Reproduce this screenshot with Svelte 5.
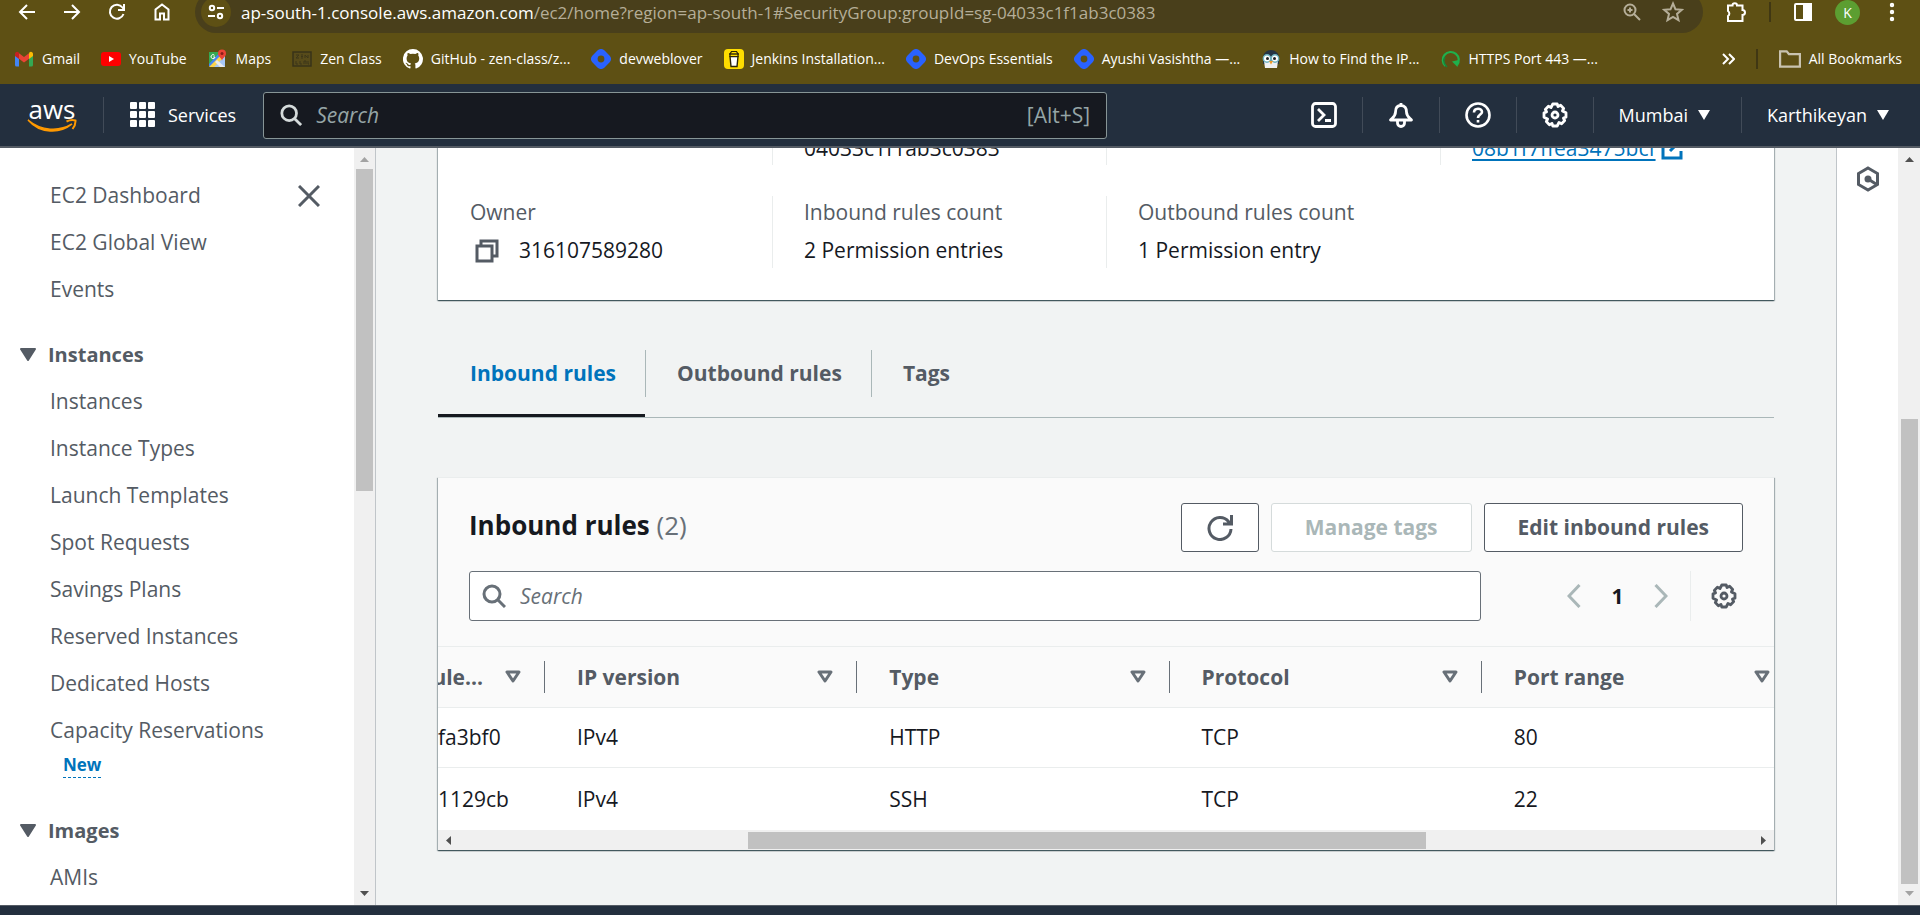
<script>
  const bookmarks = [
    { icon: 'gmail', label: 'Gmail' },
    { icon: 'youtube', label: 'YouTube' },
    { icon: 'maps', label: 'Maps' },
    { icon: 'zen', label: 'Zen Class' },
    { icon: 'github', label: 'GitHub - zen-class/z...' },
    { icon: 'hashnode', label: 'devweblover' },
    { icon: 'coffee', label: 'Jenkins Installation...' },
    { icon: 'hashnode', label: 'DevOps Essentials' },
    { icon: 'hashnode', label: 'Ayushi Vasishtha —...' },
    { icon: 'penguin', label: 'How to Find the IP...' },
    { icon: 'ring', label: 'HTTPS Port 443 —...' }
  ];

  const topLinks = ['EC2 Global View', 'Events'];
  const instanceLinks = [
    'Instances',
    'Instance Types',
    'Launch Templates',
    'Spot Requests',
    'Savings Plans',
    'Reserved Instances',
    'Dedicated Hosts'
  ];

  const columns = ['IP version', 'Type', 'Protocol', 'Port range'];
  const rules = [
    { id: 'fa3bf0', cells: ['IPv4', 'HTTP', 'TCP', '80'] },
    { id: '1129cb', cells: ['IPv4', 'SSH', 'TCP', '22'] }
  ];

  let navSearch = $state('');
  let ruleSearch = $state('');
</script>

{#snippet favicon(name)}
  <svg class="fav" viewBox="0 0 20 20" aria-hidden="true">
    {#if name === 'gmail'}
      <path d="M1 5v11a1.500 1.500 0 0 0 1.500 1.500H5V9z" fill="#4285f4" />
      <path d="M19 5v11a1.500 1.500 0 0 1-1.500 1.500H15V9z" fill="#34a853" />
      <path d="M15 4.500V10l4-3V5c0-2-2-3-3.500-1.800z" fill="#fbbc04" />
      <path d="M1 5v2l4 3V4L4.500 3.200C3 2 1 3 1 5z" fill="#c5221f" />
      <path d="M5 4.200v5.600l5 3.800 5-3.800V4.200L10 8z" fill="#ea4335" />
    {:else if name === 'youtube'}
      <rect x="0" y="3" width="20" height="14" rx="3" fill="#f00" />
      <path d="M8 7v6l5-3z" fill="#fff" />
    {:else if name === 'maps'}
      <path d="M1 3h16v14.500H1z" fill="#4285f4" />
      <path d="M1 3h11L1 15z" fill="#34a853" />
      <path d="M4 18 17 6v12z" fill="#a7c8f5" />
      <path d="M1 18 14 5l2.500 2.500L6 18z" fill="#fbd44b" />
      <path d="m9 11 8 7h-5l-5-5z" fill="#e8eaed" />
      <path d="M14 12c0-3-4-4-4-7.500a4 4 0 0 1 8 0C18 8 14 9 14 12z" fill="#ea4335" />
      <circle cx="14" cy="4.500" r="1.500" fill="#8c1d18" />
      <path d="M6.500 6.300A2 2 0 1 0 7 8H5.200" fill="none" stroke="#fff" />
    {:else if name === 'zen'}
      <rect x="1" y="3" width="18" height="14" fill="#574b1a" stroke="#393319" stroke-width="1.500" />
      <path d="M4 6h3L4 9h3M9 6h2M9 7.500h2M9 9h2M13 9V6l3 3V6M4 12v3h2M8 12v3h2M12 15v-3h2v3M16 12v3h1" stroke="#3d3618" fill="none" />
    {:else if name === 'github'}
      <path fill="#fff" d="M10 0a10 10 0 0 0-3.200 19.500c.5.100.7-.2.700-.5v-1.800c-2.800.6-3.400-1.300-3.400-1.300-.4-1.200-1.100-1.500-1.100-1.500-.9-.6.100-.6.100-.6 1 .1 1.500 1 1.500 1 .9 1.600 2.400 1.100 2.900.9.100-.7.400-1.100.6-1.400-2.200-.2-4.500-1.100-4.500-5 0-1.100.4-2 1-2.700-.1-.2-.4-1.300.1-2.600 0 0 .8-.3 2.700 1a9.600 9.600 0 0 1 5 0c1.900-1.300 2.700-1 2.700-1 .5 1.300.2 2.400.1 2.600.6.700 1 1.600 1 2.700 0 3.900-2.300 4.800-4.500 5 .4.300.7 1 .7 1.900V19c0 .3.200.6.700.5A10 10 0 0 0 10 0z" />
    {:else if name === 'hashnode'}
      <path fill="#2962ff" d="M1.300 6.700 6.700 1.300a4.700 4.700 0 0 1 6.600 0l5.400 5.400a4.700 4.700 0 0 1 0 6.600l-5.400 5.400a4.700 4.700 0 0 1-6.600 0l-5.400-5.400a4.700 4.700 0 0 1 0-6.600z" />
      <circle cx="10" cy="10" r="3.400" fill="#5e5014" />
    {:else if name === 'coffee'}
      <rect width="20" height="20" rx="4" fill="#fd0" />
      <path d="M6 7.500h8l-1 10H7z" fill="#fff" stroke="#2b2508" stroke-width="1.400" />
      <path d="M7.500 2.500h5L14 5v2.500H6V5z" fill="#fd0" stroke="#2b2508" stroke-width="1.200" />
      <path d="M5 5h10" stroke="#2b2508" stroke-width="1.400" />
    {:else if name === 'penguin'}
      <path d="M2 9c0-5 4-8 8-8s8 3 8 8v6H2z" fill="#263544" />
      <path d="M3 12h14l-1 7H4z" fill="#f0f0f0" />
      <circle cx="6" cy="9.500" r="3.700" fill="#fff" stroke="#6db1bd" stroke-width="1.400" />
      <circle cx="14" cy="9.500" r="3.700" fill="#fff" stroke="#6db1bd" stroke-width="1.400" />
      <circle cx="6.500" cy="9.500" r="1.500" fill="#222" />
      <circle cx="13.500" cy="9.500" r="1.500" fill="#222" />
      <path d="M8 12h4l-2 3.500z" fill="#f29b2c" />
    {:else}
      <path d="M4.500 17A8 8 0 1 1 16 16" fill="none" stroke="#1fb04c" stroke-width="2.200" />
      <path d="M6 18C3 15 2 11 4 8" fill="none" stroke="#17843a" stroke-width="1.500" />
      <path d="M11 12.500 17.500 11l-1 7z" fill="#1fb04c" />
    {/if}
  </svg>
{/snippet}

{#snippet magnifier()}
  <svg class="i24" viewBox="0 0 24 24" fill="none" stroke="currentColor" stroke-width="3" aria-hidden="true">
    <circle cx="10" cy="10" r="8" /><path d="m16 16 7 7" />
  </svg>
{/snippet}

{#snippet gear()}
  <svg class="i26" viewBox="0 0 26 26" fill="none" stroke="currentColor" stroke-width="2.800" stroke-linejoin="round" aria-hidden="true">
    <path d="M10.800 2h4.400l.8 2.600 2.600-1.300 3.100 3.100L20.400 9l3.600 1.800v4.400L21.400 16l1.300 2.600-3.100 3.100-2.600-1.300-1.800 3.600h-4.400L10 21.400l-2.600 1.300-3.100-3.100L5.600 17 2 15.200v-4.400L4.600 10 3.300 7.400l3.100-3.100L9 5.600z" />
    <circle cx="13" cy="13" r="3" />
  </svg>
{/snippet}

{#snippet caret()}
  <svg class="caret" viewBox="0 0 12 12" fill="currentColor" aria-hidden="true"><path d="M0 1h12L6 11z" /></svg>
{/snippet}

{#snippet sectionCaret()}
  <svg class="section-caret" viewBox="0 0 16 14" fill="#545b64" stroke="#545b64" stroke-width="2" stroke-linejoin="round" aria-hidden="true"><path d="M1 1h14L8 12z" /></svg>
{/snippet}

{#snippet sort()}
  <svg class="sort" viewBox="0 0 16 14" fill="none" stroke="#687078" stroke-width="3" stroke-linejoin="round" aria-hidden="true"><path d="M2 2h12L8 11z" /></svg>
{/snippet}

<div class="page">
  <div class="browser">
    <div class="toolbar">
      <div class="nav-buttons">
        <button aria-label="Back"><svg class="i18" viewBox="0 0 18 18"><path d="M17 9H2M9 2 2 9l7 7" /></svg></button>
        <button aria-label="Forward"><svg class="i18" viewBox="0 0 18 18"><path d="M1 9h15M9 2l7 7-7 7" /></svg></button>
        <button aria-label="Reload"><svg class="i18" viewBox="0 0 18 18"><path d="M15.500 11A7 7 0 1 1 14.500 4.500L16 6.500M16 1v6h-6" /></svg></button>
        <button aria-label="Home"><svg class="i18" viewBox="0 0 18 18"><path d="M2.500 16.500V6.500L9 1.500l6.500 5v10H11v-6H7v6z" /></svg></button>
      </div>
      <div class="address">
        <button class="site-info" aria-label="Site information">
          <svg class="i18" viewBox="0 0 18 18"><circle cx="5" cy="5" r="2.200" /><path d="M10 5h7M1 13h7" /><circle cx="13" cy="13" r="2.200" /></svg>
        </button>
        <div class="url">ap-south-1.console.aws.amazon.com<span>/ec2/home?region=ap-south-1#SecurityGroup:groupId=sg-04033c1f1ab3c0383</span></div>
        <button class="dim" aria-label="Zoom"><svg class="i20" viewBox="0 0 20 20"><circle cx="8" cy="8" r="5.500" /><path d="m12 12 6 6M8 5.500v5M5.500 8h5" /></svg></button>
        <button class="dim" aria-label="Bookmark this page"><svg class="i22" viewBox="0 0 22 22"><path d="m11 2.500 2.500 5.800 6.300.5-4.800 4.100 1.500 6.200-5.500-3.300-5.500 3.300L7 12.900 2.200 8.800l6.300-.5z" /></svg></button>
      </div>
      <button aria-label="Extensions"><svg class="i22" viewBox="0 0 22 22"><path d="M3 4.500h4.500a2 2 0 0 1 4.500 0h5.500V9a2.500 2.500 0 0 1 0 5v6H3v-5a3 3 0 0 0 0-5z" /></svg></button>
      <span class="bar"></span>
      <button aria-label="Side panel"><svg class="i20" viewBox="0 0 20 20"><rect x="2" y="2" width="16" height="16" rx="1" /><path d="M11 2h7v16h-7z" fill="currentColor" /></svg></button>
      <button class="avatar">K</button>
      <button aria-label="Menu"><svg class="dots" viewBox="0 0 6 20"><circle cx="3" cy="3" r="1.200" /><circle cx="3" cy="10" r="1.200" /><circle cx="3" cy="17" r="1.200" /></svg></button>
    </div>

    <div class="bookmarks">
      {#each bookmarks as b}
        <a href="#bookmark">{@render favicon(b.icon)}{b.label}</a>
      {/each}
      <button class="more" aria-label="More bookmarks"><svg class="i14" viewBox="0 0 14 14"><path d="m2 2 5 5-5 5M8 2l5 5-5 5" /></svg></button>
      <span class="bar"></span>
      <a href="#all" class="all"><svg class="i22 folder" viewBox="0 0 20 20"><path d="M1 3h6l2 2.500h10V17H1z" /></svg>All Bookmarks</a>
    </div>
  </div>

  <header class="aws">
    <a href="#home" class="logo" aria-label="aws home">
      <span>aws</span>
      <svg viewBox="0 0 50 13" fill="none" stroke="#f90" aria-hidden="true">
        <path d="M1 1c13 11 31 12 44 4-12 10-32 10-44-4z" fill="#f90" stroke-width="1.500" />
        <path d="M39.500 2.500C43 .8 46 .8 48.500 1.500c.2 3-1 6-3 8.500" stroke-width="2" />
      </svg>
    </a>
    <span class="rule"></span>
    <button class="services">
      <svg class="i26" viewBox="0 0 26 26" fill="currentColor" aria-hidden="true">
        {#each [0, 9, 18] as y}{#each [0, 9, 18] as x}<rect {x} {y} width="7" height="7" rx="1" />{/each}{/each}
      </svg>
      Services
    </button>
    <label class="nav-search">
      {@render magnifier()}
      <input type="text" placeholder="Search" aria-label="Search" bind:value={navSearch} />
      <span>[Alt+S]</span>
    </label>
    <div class="tools">
      <button aria-label="CloudShell"><svg class="i26" viewBox="0 0 26 26" fill="none" stroke="currentColor" stroke-width="2.800"><rect x="1.500" y="1.500" width="23" height="23" rx="3" /><path d="m7 7 6 6-6 6M14 18.500h6" /></svg></button>
      <button aria-label="Notifications"><svg class="i26" viewBox="0 0 26 26" fill="none" stroke="currentColor" stroke-width="2.800" stroke-linejoin="round"><path d="M13 1v3M13 3.500c-4 0-5.500 3-5.500 6.500 0 4-2 5-5 8h21c-3-3-5-4-5-8 0-3.500-1.500-6.500-5.500-6.500zM9.500 19v2a3.500 3.500 0 0 0 7 0v-2" /></svg></button>
      <button aria-label="Help"><svg class="i26" viewBox="0 0 26 26" fill="none" stroke="currentColor" stroke-width="2.600"><circle cx="13" cy="13" r="11.500" /><path d="M9 10.500c0-5 8-5 8-.5 0 2.500-4 2.800-4 6M13 18v2.600" /></svg></button>
      <button aria-label="Settings">{@render gear()}</button>
      <button class="menu">Mumbai {@render caret()}</button>
      <button class="menu">Karthikeyan {@render caret()}</button>
    </div>
  </header>

  <div class="body">
    <nav class="side">
      <div class="links">
        <div class="first">
          <a href="#dash">EC2 Dashboard</a>
          <button aria-label="Close navigation"><svg class="i22" viewBox="0 0 22 22" fill="none" stroke="#545b64" stroke-width="3"><path d="m1 1 20 20M21 1 1 21" /></svg></button>
        </div>
        {#each topLinks as l}<a href="#nav">{l}</a>{/each}
        <button class="section">{@render sectionCaret()}Instances</button>
        {#each instanceLinks as l}<a href="#nav">{l}</a>{/each}
        <a href="#nav" class="tight">Capacity Reservations</a>
        <button class="new">New</button>
        <button class="section images">{@render sectionCaret()}Images</button>
        <a href="#nav">AMIs</a>
      </div>
      <div class="vscroll">
        <svg class="arrow faint" viewBox="0 0 9 5"><path d="M0 5 4.500 0 9 5z" /></svg>
        <div class="track"><div class="thumb side-thumb"></div></div>
        <svg class="arrow" viewBox="0 0 9 5"><path d="M0 0h9L4.500 5z" /></svg>
      </div>
    </nav>

    <main>
      <section class="card details">
        <div class="cut">
          <div></div>
          <div>04033c1f1ab3c0383</div>
          <div></div>
          <div>
            <a href="#vpc">08b1f7ffea3475bcf <svg class="i22" viewBox="0 0 22 22" fill="none" stroke="currentColor" stroke-width="3"><path d="M9 2H2v18h18v-7M13 2h7v7M20 2 9 13" /></svg></a>
          </div>
        </div>
        <dl>
          <div><dt>Owner</dt><dd><button class="copy" aria-label="Copy owner"><svg class="i24" viewBox="0 0 24 24" fill="none" stroke="#545b64" stroke-width="3"><path d="M6 7V2h16v15h-5" /><path d="M2 7h15v15H2z" /></svg></button>316107589280</dd></div>
          <div><dt>Inbound rules count</dt><dd>2 Permission entries</dd></div>
          <div><dt>Outbound rules count</dt><dd>1 Permission entry</dd></div>
        </dl>
      </section>

      <div class="tabs" role="tablist">
        <button role="tab" aria-selected="true" class="active"><span>Inbound rules</span></button>
        <button role="tab" aria-selected="false"><span>Outbound rules</span></button>
        <button role="tab" aria-selected="false"><span>Tags</span></button>
      </div>

      <section class="card rules">
        <div class="head">
          <div class="title-row">
            <h2>Inbound rules <span>(2)</span></h2>
            <div class="actions">
              <button class="btn" aria-label="Refresh"><svg class="i26" viewBox="0 0 26 26" fill="none" stroke="currentColor" stroke-width="3"><path d="M24 14A11 11 0 1 1 21.500 6.500L24 9M24.500 0v9H16" /></svg></button>
              <button class="btn" disabled>Manage tags</button>
              <button class="btn">Edit inbound rules</button>
            </div>
          </div>
          <div class="filter-row">
            <label class="filter">
              {@render magnifier()}
              <input type="text" placeholder="Search" aria-label="Search rules" bind:value={ruleSearch} />
            </label>
            <div class="pager">
              <button aria-label="Previous page"><svg class="chev" viewBox="0 0 14 24"><path d="M12.500 1 2 12l10.500 11" /></svg></button>
              <b>1</b>
              <button aria-label="Next page"><svg class="chev" viewBox="0 0 14 24"><path d="M1.500 1 12 12 1.500 23" /></svg></button>
              <button class="prefs" aria-label="Preferences">{@render gear()}</button>
            </div>
          </div>
        </div>
        <div class="table-wrap">
          <table>
            <thead>
              <tr>
                <th class="idcol"><div><span class="clip">rule...</span>{@render sort()}</div></th>
                {#each columns as c}<th><div><span>{c}</span>{@render sort()}</div></th>{/each}
              </tr>
            </thead>
            <tbody>
              {#each rules as r}
                <tr><td class="idcol">{r.id}</td>{#each r.cells as c}<td>{c}</td>{/each}</tr>
              {/each}
            </tbody>
          </table>
        </div>
        <div class="hscroll">
          <svg class="harrow" viewBox="0 0 5 9"><path d="M5 0v9L0 4.500z" /></svg>
          <div class="htrack"><div class="hthumb"></div></div>
          <svg class="harrow" viewBox="0 0 5 9"><path d="M0 0v9l5-4.500z" /></svg>
        </div>
      </section>
    </main>

    <aside>
      <button aria-label="Open panel">
        <svg class="i26" viewBox="0 0 26 26" fill="none" stroke="#545b64" stroke-width="3"><path d="m13 2 9.500 5.500v11L13 24l-9.500-5.500v-11z" /><circle cx="13" cy="13" r="3.500" fill="#545b64" stroke="none" /><path d="m13 13 8 5" /></svg>
      </button>
    </aside>
    <div class="vscroll page-scroll">
      <svg class="arrow" viewBox="0 0 9 5"><path d="M0 5 4.500 0 9 5z" /></svg>
      <div class="track end"><div class="thumb page-thumb"></div></div>
      <svg class="arrow faint" viewBox="0 0 9 5"><path d="M0 0h9L4.500 5z" /></svg>
    </div>
  </div>
  <footer></footer>
</div>

<style>
  :global(body) { margin: 0; }
  .page, .page :global(*) { box-sizing: border-box; }
  .page {
    display: flex; flex-direction: column; height: 100vh; overflow: hidden;
    font-family: "Open Sans", "Noto Sans", sans-serif; font-size: 21px; line-height: 33px; color: #16191f;
  }
  button { font: inherit; color: inherit; background: none; border: 0; padding: 0; display: flex; align-items: center; white-space: nowrap; }
  a { color: inherit; text-decoration: none; }
  svg { flex: none; display: block; }
  input { font: inherit; color: inherit; border: 0; background: none; outline: 0; padding: 0; flex: 1; min-width: 0; }
  .i14 { width: 14px; height: 14px; }
  .i18 { width: 18px; height: 18px; }
  .i20, .fav { width: 20px; height: 20px; }
  .i22 { width: 22px; height: 22px; }
  .i24 { width: 24px; height: 24px; }
  .i26 { width: 26px; height: 26px; }

  .browser { flex: none; height: 84px; background: #5e5014; color: #fff; overflow: hidden; }
  .browser svg:not(.fav) { fill: none; stroke: currentColor; stroke-width: 2; }
  .toolbar { display: flex; align-items: center; height: 42px; margin-top: -9px; padding-right: 25px; gap: 22px; }
  .nav-buttons { display: flex; gap: 27px; padding: 0 2px 0 18px; }
  .address { flex: 1; display: flex; align-items: center; gap: 20px; height: 42px; padding: 0 19px 0 6px; border-radius: 21px; background: #493f1b; }
  .site-info { justify-content: center; width: 30px; height: 30px; border-radius: 50%; background: #5e5014; }
  .url { flex: 1; font-size: 17px; margin-left: -10px; white-space: nowrap; overflow: hidden; }
  .url span, .dim { color: #b5ae98; }
  .bar { width: 2px; height: 20px; background: #403713; }
  .avatar { width: 25px; height: 25px; border-radius: 50%; background: #5c9e31; font-size: 14px; justify-content: center; margin-right: 7px; }
  .dots { width: 6px; height: 20px; }
  .bookmarks { display: flex; align-items: center; gap: 21px; height: 52px; padding: 0 18px 0 14px; font-size: 14px; line-height: 20px; white-space: nowrap; }
  .bookmarks a { display: flex; align-items: center; gap: 8px; }
  .more { margin-left: auto; }
  .all .folder { color: #c9c3b0; }

  .aws { flex: none; display: flex; align-items: center; height: 64px; background: #232f3e; border-bottom: 2px solid #545b64; color: #fff; font-size: 18px; font-weight: 500; }
  .logo { margin: 0 26px 0 27px; width: 50px; text-align: center; font-size: 26px; line-height: 20px; font-weight: 500; }
  .logo span { display: block; }
  .logo svg { width: 50px; height: 13px; }
  .rule { width: 1px; height: 36px; background: #414b58; margin-right: 26px; }
  .services { gap: 12px; }
  .nav-search { display: flex; align-items: center; gap: 14px; flex: 0 1 844px; height: 47px; margin-left: 27px; padding: 0 16px; border: 1px solid #879596; border-radius: 3px; background: #161920; font-size: 21px; font-weight: 400; color: #95a5a6; }
  .nav-search svg { width: 22px; height: 22px; color: #d5dbdb; }
  .nav-search input::placeholder, .filter input::placeholder { color: inherit; font-style: italic; opacity: 1; }
  .tools { display: flex; align-items: center; margin-left: auto; }
  .tools button { height: 36px; padding: 0 25px; border-left: 1px solid #414b58; }
  .tools button:first-child { border: 0; }
  .tools .menu { gap: 10px; padding-right: 31px; }
  .caret { width: 12px; height: 12px; }

  .body { flex: 1; min-height: 0; display: flex; background: #f1f3f3; }
  .side { flex: none; display: flex; width: 376px; background: #fff; color: #545b64; border-right: 1px solid #c0c5c9; }
  .links { flex: 1; padding-top: 31px; overflow: hidden; }
  .links a { display: block; padding-left: 50px; margin-bottom: 14px; }
  .links a.tight { margin-bottom: 6px; }
  .first { display: flex; justify-content: space-between; padding-right: 34px; height: 47px; align-items: flex-start; }
  .first button { height: 33px; }
  .section { font-weight: 700; font-size: 20px; gap: 12px; padding-left: 20px; margin: 32px 0 14px; }
  .section-caret { width: 16px; height: 14px; }
  .new { margin-left: 63px; font-size: 17px; font-weight: 700; color: #0073bb; line-height: 24px; border-bottom: 1px dashed #0073bb; }
  .images { margin-top: 36px; }
  .vscroll { flex: none; width: 21px; background: #f0f0f0; display: flex; flex-direction: column; align-items: center; justify-content: space-between; padding: 9px 0; }
  .arrow { width: 9px; height: 5px; fill: #505050; }
  .faint { fill: #a3a3a3; }
  .track { flex: 1; width: 17px; margin: 7px 0; display: flex; flex-direction: column; }
  .track.end { justify-content: flex-end; }
  .thumb { background: #c1c1c1; }
  .side-thumb { height: 45%; }
  .page-thumb { height: 65%; }

  main { flex: 1; min-width: 0; padding: 0 62px; overflow: hidden; }
  .card { background: #fff; box-shadow: 0 1px 1px rgba(0, 28, 36, .5), 1px 1px 1px rgba(0, 28, 36, .25), -1px 1px 1px rgba(0, 28, 36, .25); }
  .details { padding: 0 0 32px; margin-top: -16px; }
  .cut, dl { display: grid; grid-template-columns: repeat(4, 1fr); margin: 0; }
  dl { margin-top: 31px; }
  .cut > div, dl > div { padding-left: 31px; border-left: 1px solid #eaeded; min-height: 33px; }
  .cut > div:first-child, dl > div:first-child { border-color: transparent; }
  .cut a { display: flex; align-items: center; gap: 5px; width: max-content; color: #0073bb; text-decoration: underline; text-decoration-thickness: 2px; text-underline-offset: 3px; }
  dl > div { height: 72px; }
  dt { color: #545b64; margin-bottom: 5px; }
  dd { margin: 0; display: flex; }
  .copy { margin: 0 20px 0 5px; }

  .tabs { display: flex; margin-top: 50px; border-bottom: 1px solid #aab7b8; }
  .tabs button { padding: 0 0 20px; font-weight: 700; font-size: 21px; color: #545b64; }
  .tabs span { padding: 7px 29px 7px 31px; border-left: 1px solid #aab7b8; line-height: 33px; }
  .tabs .active { color: #0073bb; border-bottom: 3px solid #16191f; padding-bottom: 17px; }
  .tabs .active span { border-color: transparent; }

  .rules { margin-top: 59px; }
  .head { background: #fafafa; padding: 25px 31px 25px; border-bottom: 1px solid #eaeded; border-top: 1px solid #eaeded; }
  .title-row { display: flex; justify-content: space-between; }
  h2 { margin: 0; font-size: 26px; line-height: 44px; font-weight: 700; }
  h2 span { font-weight: 400; color: #687078; }
  .actions { display: flex; gap: 12px; }
  .btn { height: 49px; padding: 0 33px; border: 1px solid #545b64; border-radius: 3px; background: #fff; color: #545b64; font-weight: 700; }
  .btn:first-child { padding: 0 25px; }
  .btn:disabled { border-color: #d5dbdb; color: #aab7b8; }
  .filter-row { display: flex; justify-content: space-between; margin-top: 19px; }
  .filter { flex: 0 1 1012px; display: flex; align-items: center; gap: 14px; height: 50px; padding: 0 12px; border: 1px solid #687078; border-radius: 3px; background: #fff; color: #687078; }
  .pager { display: flex; align-items: center; }
  .chev { width: 14px; height: 24px; fill: none; stroke: #aab7b8; stroke-width: 3; }
  .pager b { width: 73px; text-align: center; }
  .prefs { height: 50px; margin-left: 22px; padding: 0 6px 0 20px; border-left: 1px solid #eaeded; color: #545b64; }
  .table-wrap { overflow: hidden; }
  table { border-collapse: separate; border-spacing: 0; table-layout: fixed; width: 1356px; min-width: 100%; }
  th, td { height: 60px; padding: 0 0 0 32px; text-align: left; border-bottom: 1px solid #eaeded; }
  th { background: #fafafa; color: #545b64; font-weight: 700; height: 61px; padding: 0; }
  th div { display: flex; align-items: center; justify-content: space-between; height: 32px; padding: 0 23px 0 32px; border-right: 1px solid #687078; }
  .idcol { width: 107px; padding-left: 0; }
  .idcol div { padding-left: 0; }
  .clip { width: 45px; display: flex; justify-content: flex-end; overflow: hidden; }
  .sort { width: 16px; height: 14px; }
  tbody tr:last-child td { border-bottom: 0; height: 62px; }
  .hscroll { display: flex; align-items: center; height: 20px; padding: 0 8px; background: #f0f0f0; }
  .harrow { width: 5px; height: 9px; fill: #505050; }
  .htrack { flex: 1; height: 17px; margin: 0 7px; }
  .hthumb { width: 52.3%; height: 17px; margin-left: 22.4%; background: #c1c1c1; }

  aside { flex: none; width: 62px; background: #fff; border-left: 1px solid #c0c5c9; display: flex; justify-content: center; align-items: flex-start; padding-top: 18px; }
  .page-scroll { width: 22px; }
  footer { flex: none; height: 10px; background: #232f3e; border-top: 1px solid #545b64; }
</style>
